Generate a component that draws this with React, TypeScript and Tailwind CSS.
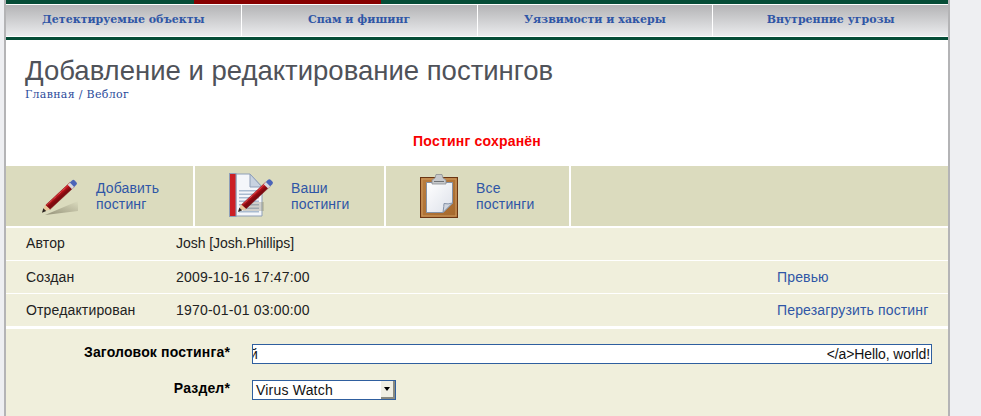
const Pencil = ({ id }: { id: string }) => (
  <>
    <defs>
      <linearGradient id={id} gradientUnits="userSpaceOnUse" x1="14" y1="13" x2="20" y2="20">
        <stop offset="0" stopColor="#f8555a" />
        <stop offset="0.5" stopColor="#d9141c" />
        <stop offset="1" stopColor="#7f0a10" />
      </linearGradient>
    </defs>
    <path d="M4 29 L32 3 L37 8 L9 34 Z" fill={`url(#${id})`} stroke="#6d0d10" strokeWidth="0.5" />
    <path d="M6.5 28 L32 4.5" stroke="#ffb0b0" strokeWidth="0.7" strokeDasharray="1 1" />
    <path d="M0.5 36.5 L3.5 28.5 L9.5 34 Z" fill="#e8c79a" />
    <path d="M0 37.5 L1.5 32.5 L4.8 35.5 Z" fill="#2a2320" />
    <path d="M29.5 5.5 L32.5 2.5 L37.5 7.5 L34.5 10.5 Z" fill="#d8d8dc" />
    <path d="M32 3 L34.5 0.5 Q36 -1 37.5 0.5 L39.5 2.5 Q41 4 39.5 5.5 L37 8 Z" fill="#4a64b8" />
  </>
);

const PencilIcon = () => (
  <svg width="40" height="42" viewBox="0 0 40 42" className="shrink-0 block -mt-[3px]">
    <defs>
      <linearGradient id="sh1" x1="0" y1="1" x2="1" y2="0">
        <stop offset="0" stopColor="#8d8a72" stopOpacity="0.9" />
        <stop offset="1" stopColor="#8d8a72" stopOpacity="0" />
      </linearGradient>
    </defs>
    <path d="M3 41 L36 27 L36 37 Z" fill="url(#sh1)" />
    <g transform="translate(0,6) scale(0.87)">
      <Pencil id="p1" />
    </g>
  </svg>
);

const DocIcon = () => (
  <svg width="46" height="46" viewBox="0 0 46 46" className="shrink-0 block">
    <path d="M7 1 H21 L33 14 V43 H7 Z" fill="#f4f6fa" stroke="#8e9fb8" />
    <rect x="0.5" y="0.5" width="6.5" height="43" fill="#cc1f24" stroke="#8e9fb8" />
    <path d="M21 1 V14 H33 Z" fill="#c8d2e0" stroke="#8e9fb8" />
    <g fill="#a9bbd0">
      <rect x="10" y="17" width="20" height="1.5" />
      <rect x="10" y="20.5" width="20" height="1.5" />
      <rect x="10" y="24" width="20" height="1.5" />
      <rect x="10" y="27.5" width="20" height="1.5" />
      <rect x="10" y="31" width="20" height="1.5" />
      <rect x="10" y="34.5" width="20" height="1.5" />
      <rect x="10" y="38" width="20" height="1.5" />
    </g>
    <rect x="14" y="29" width="21" height="9" fill="#8d8a72" opacity="0.35" />
    <g transform="translate(9,6.4) scale(0.87)">
      <Pencil id="p2" />
    </g>
  </svg>
);

const ClipIcon = () => (
  <svg width="38" height="44" viewBox="0 0 38 44" className="shrink-0 block">
    <defs>
      <linearGradient id="wood" x1="0" y1="0" x2="1" y2="1">
        <stop offset="0" stopColor="#bb7f40" />
        <stop offset="1" stopColor="#a5682c" />
      </linearGradient>
      <linearGradient id="paper" x1="0" y1="0" x2="1" y2="1">
        <stop offset="0" stopColor="#ffffff" />
        <stop offset="1" stopColor="#dde1ea" />
      </linearGradient>
    </defs>
    <rect x="0.5" y="3.5" width="37" height="40" fill="url(#wood)" stroke="#6b3512" />
    <rect x="2" y="5" width="34" height="37" fill="none" stroke="#cf9c62" />
    <path d="M6.5 8.5 H32.5 V29 L23 38.5 H6.5 Z" fill="url(#paper)" stroke="#8592a6" />
    <path d="M23 38.5 Q24 31 24 29.5 Q28 30.5 32.5 29 Z" fill="#cfd4dd" stroke="#8592a6" />
    <path d="M15 4 L16 0.5 H22 L23 4 L26 6 V10 H12 V6 Z" fill="#c6c8cb" stroke="#8b8e92" strokeWidth="0.8" />
    <rect x="14" y="7" width="10" height="1" fill="#6f7276" />
  </svg>
);

const navItems = ["Детектируемые объекты", "Спам и фишинг", "Уязвимости и хакеры", "Внутренние угрозы"];

const rows = [
  { label: "Автор", value: "Josh [Josh.Phillips]", link: "", shift: "pb-[2px]", valueClass: "tracking-[-0.05px]" },
  { label: "Создан", value: "2009-10-16 17:47:00", link: "Превью", shift: "", valueClass: "tracking-[0.2px]" },
  { label: "Отредактирован", value: "1970-01-01 03:00:00", link: "Перезагрузить постинг", shift: "", valueClass: "tracking-[0.2px]" },
];

export default function App() {
  return (
    <div className="h-[416px] overflow-hidden bg-[#eeeff2] font-['Liberation_Sans',Arial,sans-serif]">
      <div className="ml-1 w-[946px] h-full border-x-2 border-x-[#b4b4b6] bg-white">
        {/* top stripe */}
        <div className="h-1 bg-[#064d37] pl-[188px]">
          <div className="h-full w-[187px] bg-[#870000]" />
        </div>
        {/* navigation */}
        <div className="flex h-[31px] mt-px gap-px">
          {navItems.map((t) => (
            <div
              key={t}
              className="flex-1 flex items-center justify-center bg-linear-to-b from-[#b4b4b6] to-[#ebecee] font-['DejaVu_Serif',serif] font-bold text-[11px] text-[#2f56a6]"
            >
              {t}
            </div>
          ))}
        </div>
        <div className="h-[3px] mt-px bg-[#064d37]" />
        {/* heading */}
        <div className="pl-[19px] pt-[15px] h-[126px]">
          <h1 className="text-[27.5px] leading-[32px] text-[#4f5259]">Добавление и редактирование постингов</h1>
          <div className="font-['DejaVu_Serif',serif] text-[11px] tracking-[0.3px] leading-[14px] mt-px text-[#2a4a9a]">
            Главная / Веблог
          </div>
          <div className="mt-[31px] -ml-[19px] text-center text-[14px] tracking-[0.2px] leading-[16px] font-bold text-[#f80000]">
            Постинг сохранён
          </div>
        </div>
        {/* tabs */}
        <div className="flex h-[60px] gap-[2px] text-[14px] tracking-[0.15px] leading-[16px] text-[#2f56a6]">
          <div className="w-[187px] bg-[#dbdbbe] flex items-center pl-[36px] gap-[14px]">
            <PencilIcon />
            <div>Добавить<br />постинг</div>
          </div>
          <div className="w-[189px] bg-[#dbdbbe] flex items-center pl-[34px] gap-[16px]">
            <DocIcon />
            <div>Ваши<br />постинги</div>
          </div>
          <div className="w-[183px] bg-[#dbdbbe] flex items-center pl-[34px] gap-[18px]">
            <ClipIcon />
            <div>Все<br />постинги</div>
          </div>
          <div className="flex-1 bg-[#dbdbbe]" />
        </div>
        {/* info rows */}
        <div className="mt-[2px] flex flex-col gap-px text-[14px] tracking-[0.15px]">
          {rows.map((r) => (
            <div key={r.label} className={`h-[32px] bg-[#f0efdc] flex items-center pl-[20px] text-[#222222] ${r.shift}`}>
              <div className="w-[150px]">{r.label}</div>
              <div className={`w-[601px] ${r.valueClass}`}>{r.value}</div>
              <div className="text-[#2f56a6]">{r.link}</div>
            </div>
          ))}
        </div>
        {/* form */}
        <div className="mt-[3px] bg-[#f0efdc] h-[100px] pt-[15px] text-[14px]">
          <div className="flex items-center h-[20px]">
            <div className="w-[224px] text-right font-bold text-[14px] tracking-[0.15px] text-black -mt-[3px]">Заголовок постинга*</div>
            <div className="ml-[22px] w-[680px] h-[20px] border-[1px] border-[#2f5f9f] bg-white flex justify-between items-center overflow-hidden text-[#111111] pr-[1px]">
              <span className="-ml-[3px]">й</span>
              <span className="tracking-[-0.1px]">&lt;/a&gt;Hello, world!</span>
            </div>
          </div>
          <div className="flex items-center h-[20px] mt-[16px]">
            <div className="w-[224px] text-right font-bold text-[14px] tracking-[0.15px] text-black -mt-[3px]">Раздел*</div>
            <div className="ml-[22px] w-[144px] h-[20px] border border-[#2f5f9f] bg-white flex items-center justify-between pl-[3px] text-[#111111]">
              <span className="tracking-[0.2px]">Virus Watch</span>
              <span className="h-[18px] w-[14px] bg-[#f0efe4] border-r-2 border-b-2 border-[#8a8a80] flex items-center justify-center">
                <span className="block w-0 h-0 border-x-[3.5px] border-x-transparent border-t-[4px] border-t-black" />
              </span>
            </div>
          </div>
        </div>
      </div>
    </div>
  );
}
